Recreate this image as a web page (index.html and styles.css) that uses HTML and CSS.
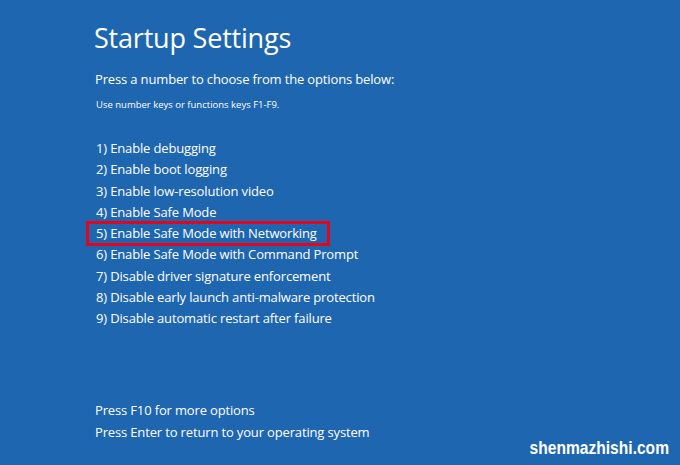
FILE: index.html
```html
<!DOCTYPE html>
<html>
<head>
<meta charset="utf-8">
<link rel="stylesheet" href="styles.css">
</head>
<body>
<div class="screen">
  <h1 class="title">Startup Settings</h1>
  <p class="prompt">Press a number to choose from the options below:</p>
  <p class="hint">Use number keys or functions keys F1-F9.</p>
  <ol class="options">
    <li>1) Enable debugging</li>
    <li>2) Enable boot logging</li>
    <li>3) Enable low-resolution video</li>
    <li>4) Enable Safe Mode</li>
    <li class="selected">5) Enable Safe Mode with Networking</li>
    <li>6) Enable Safe Mode with Command Prompt</li>
    <li>7) Disable driver signature enforcement</li>
    <li>8) Disable early launch anti-malware protection</li>
    <li>9) Disable automatic restart after failure</li>
  </ol>
  <div class="footer">
    <p>Press F10 for more options</p>
    <p>Press Enter to return to your operating system</p>
  </div>
  <div class="watermark">shenmazhishi.com</div>
</div>
</body>
</html>
```
FILE: styles.css
```css
html, body {
  margin: 0;
  padding: 0;
}
body {
  background: #1f66b0;
  color: #ffffff;
  font-family: "Open Sans", "Noto Sans", sans-serif;
  width: 680px;
  height: 465px;
  overflow: hidden;
}
.screen {
  position: relative;
  width: 680px;
  height: 465px;
  box-sizing: border-box;
  padding: 20px 0 0 94px;
  display: flex;
  flex-direction: column;
}
.title {
  margin: 0;
  font-weight: 400;
  font-size: 27px;
  line-height: 36px;
  letter-spacing: -0.2px;
}
.prompt {
  margin: 14px 0 0 1px;
  font-size: 13px;
  line-height: 18px;
  letter-spacing: -0.15px;
}
.hint {
  margin: 10px 0 0 2px;
  font-size: 9.5px;
  line-height: 14px;
}
.options {
  list-style: none;
  margin: 26px 0 0 0;
  padding: 0;
  display: flex;
  flex-direction: column;
}
.options li {
  font-size: 13px;
  line-height: 21.3px;
  padding-left: 2px;
  letter-spacing: -0.15px;
  width: fit-content;
}
.options li.selected {
  outline: 3px solid #e3051b;
  outline-offset: -1px;
  padding: 0 8px 0 8px;
  margin-left: -6px;
  box-sizing: border-box;
  width: 240px;
}
.footer {
  margin-top: 69px;
  padding-left: 1px;
}
.footer p {
  margin: 0;
  font-size: 13px;
  line-height: 22px;
  letter-spacing: -0.15px;
}
.watermark {
  position: absolute;
  right: 11px;
  bottom: 6px;
  font-family: "Liberation Sans", Arial, sans-serif;
  font-weight: 700;
  font-size: 19px;
  line-height: 22px;
  transform: scaleX(0.82);
  transform-origin: right center;
}
```
